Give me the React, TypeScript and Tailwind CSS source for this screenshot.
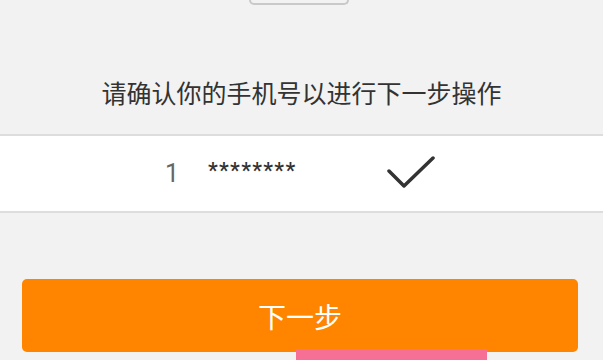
export default function App() {
  return (
    <div
      className="relative h-[360px] w-[603px] overflow-hidden bg-[#f2f2f2]"
      style={{ fontFamily: '"Noto Sans CJK SC", Roboto, sans-serif' }}
    >
      <div className="flex h-[5px] justify-center">
        <div className="ml-[-5px] h-[5px] w-[100px] rounded-b-[6px] border-x-2 border-b-2 border-[#c9c9c9] bg-[#f2f2f2]" />
      </div>

      <h1 className="mt-[70px] text-center text-[25px] leading-[34px] text-[#333333]">
        请确认你的手机号以进行下一步操作
      </h1>

      <div className="mt-[25px] flex h-[79px] items-center border-y-2 border-[#dddddd] bg-white">
        <span
          className="ml-[165px] w-[43px] text-[25px] text-[#666666]"
          style={{ fontFamily: "Roboto, sans-serif" }}
        >
          1
        </span>
        <span
          className="mb-[6px] text-[22px] font-medium tracking-[1.3px] text-[#333333]"
          style={{ fontFamily: "Roboto, sans-serif" }}
        >
          ********
        </span>
        <svg
          className="ml-[91px]"
          width="50"
          height="36"
          viewBox="0 0 50 36"
          fill="none"
        >
          <path
            d="M2 15 L17 30 L46 2"
            stroke="#333333"
            strokeWidth="3.5"
            strokeLinecap="round"
            strokeLinejoin="round"
          />
        </svg>
      </div>

      <div className="mt-[66px] pl-[22px] pr-[25px]">
        <button className="flex h-[73px] w-full items-center justify-center rounded-[5px] bg-[#ff8500] text-[28px] text-white">
          下一步
        </button>
      </div>

      <div className="absolute bottom-0 left-[296px] h-[11px] w-[191px] bg-[#f66f95]" />
    </div>
  );
}
